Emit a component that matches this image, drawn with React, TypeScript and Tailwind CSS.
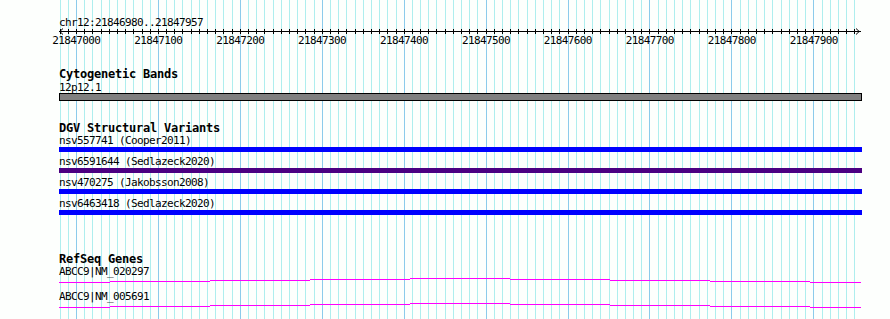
const START = 21846980;
const X0 = 59.6;
const SCALE = 0.8193;
const LEFT = 59;

const xAt = (bp: number) => X0 + (bp - START) * SCALE;

const gridSteps = Array.from({ length: 98 }, (_, k) => k);
const majors = Array.from({ length: 10 }, (_, i) => 21847000 + i * 100);

const variants = [
  { label: "nsv557741 (Cooper2011)", color: "bg-[#0000ff]" },
  { label: "nsv6591644 (Sedlazeck2020)", color: "bg-[#4b0082]" },
  { label: "nsv470275 (Jakobsson2008)", color: "bg-[#0000ff]" },
  { label: "nsv6463418 (Sedlazeck2020)", color: "bg-[#0000ff]" },
];

const genes = ["ABCC9|NM_020297", "ABCC9|NM_005691"];

// stepped magenta line, page x ranges and row offset
const geneSegs: [number, number, number][] = [
  [59, 110, 4],
  [110, 210, 3],
  [210, 310, 2],
  [310, 410, 1],
  [410, 510, 0],
  [510, 610, 1],
  [610, 710, 2],
  [710, 810, 3],
  [810, 861, 4],
];

const mono = "font-['DejaVu_Sans_Mono',monospace] text-[11px] tracking-[-0.62px] text-black";
const title = "font-['DejaVu_Sans_Mono',monospace] text-[12px] font-bold tracking-[-0.22px] text-black";

function Grid() {
  return (
    <svg className="absolute inset-0" width={890} height={319} shapeRendering="crispEdges">
      {gridSteps.map((k) => (
        <rect
          key={k}
          x={Math.round(xAt(START + k * 10))}
          y={0}
          width={1}
          height={319}
          fill={k % 10 === 2 ? "#8ccbeb" : "#aeeeee"}
        />
      ))}
    </svg>
  );
}

function Ruler() {
  return (
    <svg width={805} height={20} className={`${mono} overflow-visible`}>
      <rect x={0} y={4} width={802} height={1} fill="#000" shapeRendering="crispEdges" />
      <path d="M4 1.5 L0.8 4.5 L4 7.5" stroke="#000" fill="none" />
      <path d="M797 1.5 L800.2 4.5 L797 7.5" stroke="#000" fill="none" />
      {gridSteps.map((k) => (
        <rect
          key={k}
          x={Math.round(xAt(START + k * 10)) - LEFT}
          y={2}
          width={1}
          height={5}
          fill="#000"
          shapeRendering="crispEdges"
        />
      ))}
      {majors.map((bp) => (
        <text key={bp} x={xAt(bp) - LEFT + 0.3} y={17} textAnchor="middle" fill="#000">
          {bp}
        </text>
      ))}
    </svg>
  );
}

function GeneLine() {
  return (
    <svg width={805} height={12} shapeRendering="crispEdges">
      {geneSegs.map(([a, b, y]) => (
        <rect key={a} x={a - LEFT} y={y} width={b - a} height={1} fill="#ff00ff" />
      ))}
    </svg>
  );
}

export default function App() {
  return (
    <div className="relative w-[890px] h-[319px] overflow-hidden bg-[#fdfffd]">
      <Grid />
      <div className="relative flex flex-col pl-[59px]">
        <div className={`${mono} mt-[16px] h-[13px] leading-[13px]`}>chr12:21846980..21847957</div>
        <div className="h-[20px] -mt-[2px]">
          <Ruler />
        </div>

        <div className={`${title} mt-[21px] h-[13px] leading-[13px]`}>Cytogenetic Bands</div>
        <div className={`${mono} h-[12px] leading-[13px]`}>12p12.1</div>
        <div className="w-[803px] h-[8px] border border-black bg-[#808080]" />

        <div className={`${title} mt-[21px] h-[12px] leading-[13px]`}>DGV Structural Variants</div>
        {variants.map((v) => (
          <div key={v.label} className="flex flex-col h-[21px]">
            <div className={`${mono} h-[13px] leading-[13px]`}>{v.label}</div>
            <div className={`w-[803px] h-[5px] ${v.color}`} />
          </div>
        ))}

        <div className={`${title} mt-[35px] h-[12px] leading-[13px]`}>RefSeq Genes</div>
        {genes.map((g) => (
          <div key={g} className="flex flex-col h-[25px]">
            <div className={`${mono} h-[13px] leading-[13px]`}>{g}</div>
            <GeneLine />
          </div>
        ))}
      </div>
    </div>
  );
}
